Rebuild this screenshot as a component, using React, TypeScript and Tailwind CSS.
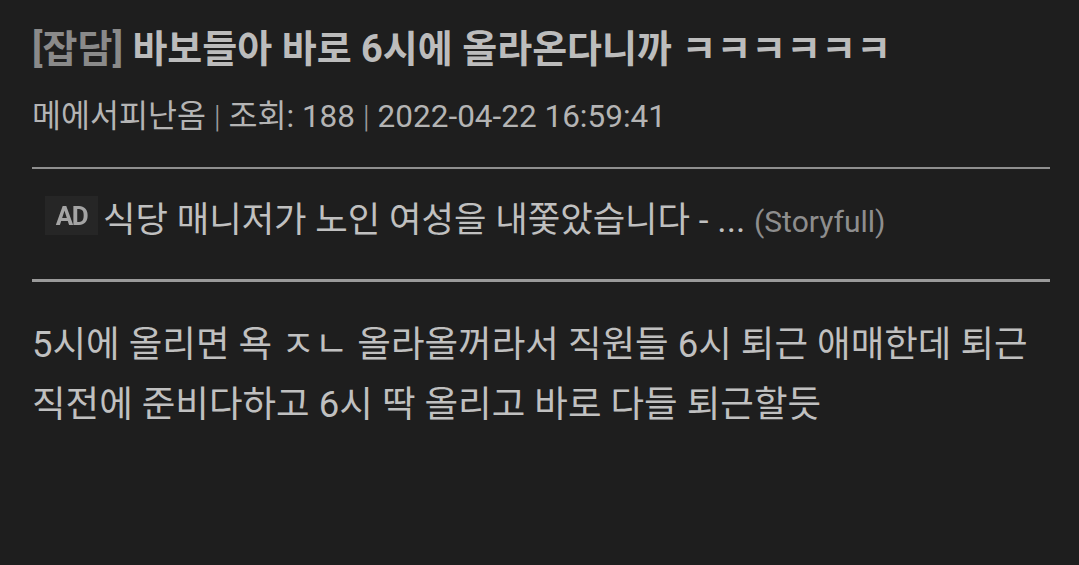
import React from "react";

const font = { fontFamily: '"Roboto", "Noto Sans CJK KR", sans-serif' };

export default function App() {
  return (
    <div
      className="w-[1079px] h-[565px] bg-[#1e1e1e] overflow-hidden pt-[27px] pl-[32px] pr-[29px] text-[#bcbcbc]"
      style={font}
    >
      <div className="text-[38px] leading-[44px] font-bold whitespace-nowrap">
        <span className="text-[#8a8a8a]">[잡담]</span> 바보들아 바로 6시에 올라온다니까 ㅋㅋㅋㅋㅋㅋ
      </div>
      <div className="mt-[26px] text-[31.5px] leading-[40px] text-[#b4b4b4] whitespace-nowrap">
        메에서피난옴 <span className="text-[#9a9a9a] font-light">|</span> 조회: 188{" "}
        <span className="text-[#9a9a9a] font-light">|</span> 2022-04-22 16:59:41
      </div>
      <div className="mt-[30px] h-[2px] bg-[#8f8f8f]" />
      <div className="h-[110px] pt-[27px] flex items-start">
        <div className="ml-[13px] w-[53px] h-[39px] bg-[#262626] flex items-center justify-center">
          <span className="text-[26px] leading-none font-bold text-[#a4a4a4] tracking-[-1.5px] blur-[0.4px]">AD</span>
        </div>
        <div className="ml-[5px] mt-[2px] text-[35.3px] leading-[44px] whitespace-nowrap text-[#c0c0c0]">
          식당 매니저가 노인 여성을 내쫓았습니다 - ...{" "}
          <span className="text-[30px] text-[#8e8e8e]">(Storyfull)</span>
        </div>
      </div>
      <div className="h-[3px] bg-[#9a9a9a]" />
      <div className="mt-[33px] text-[36.5px] leading-[60px] whitespace-nowrap text-[#c0c0c0]">
        5시에 올리면 욕 ㅈㄴ 올라올꺼라서 직원들 6시 퇴근 애매한데 퇴근
        <br />
        직전에 준비다하고 6시 딱 올리고 바로 다들 퇴근할듯
      </div>
    </div>
  );
}
